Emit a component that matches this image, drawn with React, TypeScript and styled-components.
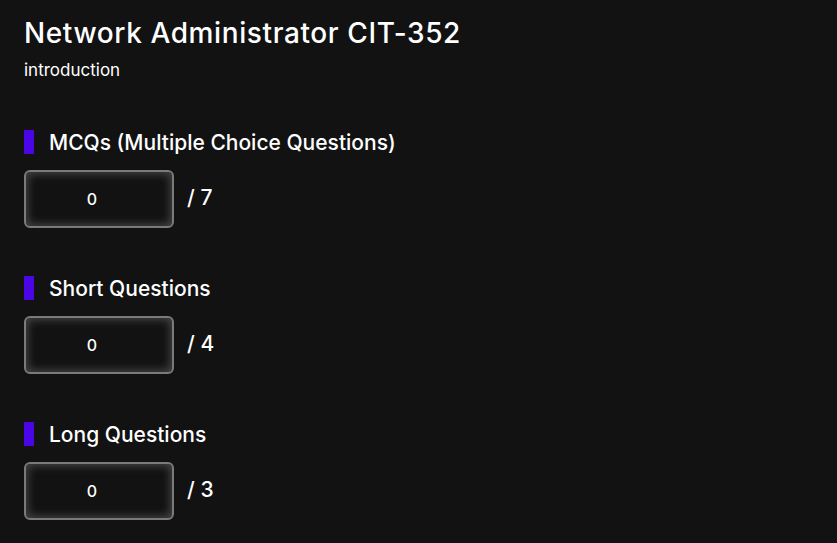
import React from "react";
import styled, { createGlobalStyle } from "styled-components";

const Global = createGlobalStyle`
  html, body { margin: 0; padding: 0; background: #121212; }
  body { font-family: "Inter", "Noto Sans", sans-serif; color: #fff; }
`;

const Page = styled.div`
  padding: 14px 24px 20px;
  background: #121212;
  min-height: 543px;
  box-sizing: border-box;
`;

const Title = styled.h1`
  margin: 0;
  font-size: 28px;
  font-weight: 500;
  line-height: 38px;
  letter-spacing: 0.6px;
`;

const Subtitle = styled.p`
  margin: 7px 0 0;
  font-size: 17px;
  line-height: 22px;
  font-weight: 400;
`;

const Sections = styled.div`
  display: flex;
  flex-direction: column;
  gap: 48px;
  margin-top: 49px;
`;

const Section = styled.section`
  display: flex;
  flex-direction: column;
  gap: 16px;
`;

const Heading = styled.div`
  display: flex;
  align-items: center;
  gap: 15px;
  height: 24px;
  font-size: 21px;
  font-weight: 500;
`;

const Bar = styled.span`
  width: 10px;
  height: 24px;
  background: #4b06e6;
`;

const Row = styled.div`
  display: flex;
  align-items: center;
  gap: 13px;
`;

const ScoreBox = styled.div`
  width: 150px;
  height: 58px;
  box-sizing: border-box;
  padding-right: 14px;
  border: 2px solid #7a7a7a;
  border-radius: 6px;
  background: #121212;
  box-shadow: inset 0 0 8px 2px rgba(255, 255, 255, 0.22);
  display: flex;
  align-items: center;
  justify-content: center;
  font-size: 16px;
  font-weight: 500;
`;

const Total = styled.span`
  font-size: 21px;
  font-weight: 500;
  margin-top: -4px;
`;

const sections = [
  { name: "MCQs (Multiple Choice Questions)", total: 7 },
  { name: "Short Questions", total: 4 },
  { name: "Long Questions", total: 3 },
];

export default function App() {
  return (
    <>
      <Global />
      <Page>
        <Title>Network Administrator CIT-352</Title>
        <Subtitle>introduction</Subtitle>
        <Sections>
          {sections.map((s) => (
            <Section key={s.name}>
              <Heading>
                <Bar />
                {s.name}
              </Heading>
              <Row>
                <ScoreBox>0</ScoreBox>
                <Total>/ {s.total}</Total>
              </Row>
            </Section>
          ))}
        </Sections>
      </Page>
    </>
  );
}
